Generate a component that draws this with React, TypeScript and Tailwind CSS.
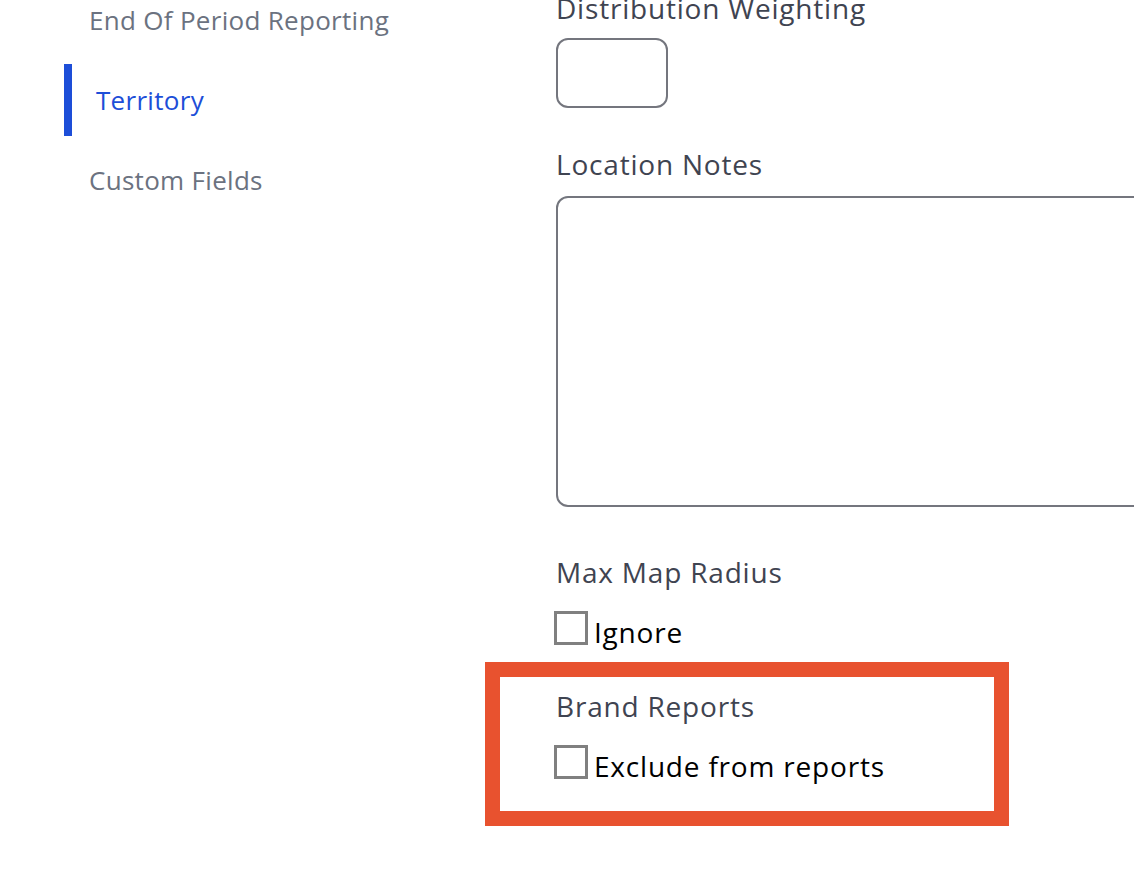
import { useState } from 'react';

const navItems = ['End Of Period Reporting', 'Territory', 'Custom Fields'];

function Checkbox({ label }: { label: string }) {
    const [checked, setChecked] = useState(false);
    return (
        <label className="flex items-center h-[34px] cursor-pointer">
            <input
                type="checkbox"
                checked={checked}
                onChange={() => setChecked(!checked)}
                className="appearance-none size-[34px] -ml-[2px] border-[3px] border-[#808080] bg-white shrink-0 checked:bg-[#808080]"
            />
            <span className="ml-[6px] mt-[8px] text-[28px] tracking-[0.8px] text-black leading-[34px]">{label}</span>
        </label>
    );
}

export default function App() {
    const [active, setActive] = useState('Territory');

    return (
        <div className="w-[1134px] h-[882px] overflow-hidden bg-white flex font-['Open_Sans',sans-serif]">
            <nav className="w-[556px] pl-[64px] -mt-[16px] flex flex-col gap-2 shrink-0">
                {navItems.map((item) => (
                    <button
                        key={item}
                        onClick={() => setActive(item)}
                        className={
                            item === active
                                ? 'h-[72px] flex items-center text-left border-l-8 border-[#1d4ed8] pl-6 text-[26px] tracking-[0.3px] text-[#1d4ed8]'
                                : 'h-[72px] flex items-center text-left pl-[25px] text-[26px] tracking-[0.3px] text-[#6b7280]'
                        }
                    >
                        {item}
                    </button>
                ))}
            </nav>

            <main className="flex-1 -mt-[10px] flex flex-col items-start">
                <div className="h-[36px] leading-[36px] text-[28px] tracking-[0.8px] text-[#3f4451]">Distribution Weighting</div>
                <input className="mt-[12px] h-[70px] w-[112px] rounded-[12px] border-2 border-[#74767e] outline-none" />

                <div className="mt-[38px] h-[36px] leading-[36px] text-[28px] tracking-[0.8px] text-[#3f4451]">Location Notes</div>
                <textarea className="mt-[14px] h-[311px] w-[640px] shrink-0 rounded-[12px] border-2 border-[#74767e] outline-none resize-none" />

                <div className="mt-[47px] h-[36px] leading-[36px] text-[28px] tracking-[0.8px] text-[#3f4451]">Max Map Radius</div>
                <div className="mt-[21px]">
                    <Checkbox label="Ignore" />
                </div>

                <section className="mt-[17px] -ml-[71px] w-[524px] h-[164px] border-[15px] border-[#e8522f] pl-[56px] pt-[11px]">
                    <div className="h-[36px] leading-[36px] text-[28px] tracking-[0.8px] text-[#3f4451]">Brand Reports</div>
                    <div className="mt-[21px]">
                        <Checkbox label="Exclude from reports" />
                    </div>
                </section>
            </main>
        </div>
    );
}
